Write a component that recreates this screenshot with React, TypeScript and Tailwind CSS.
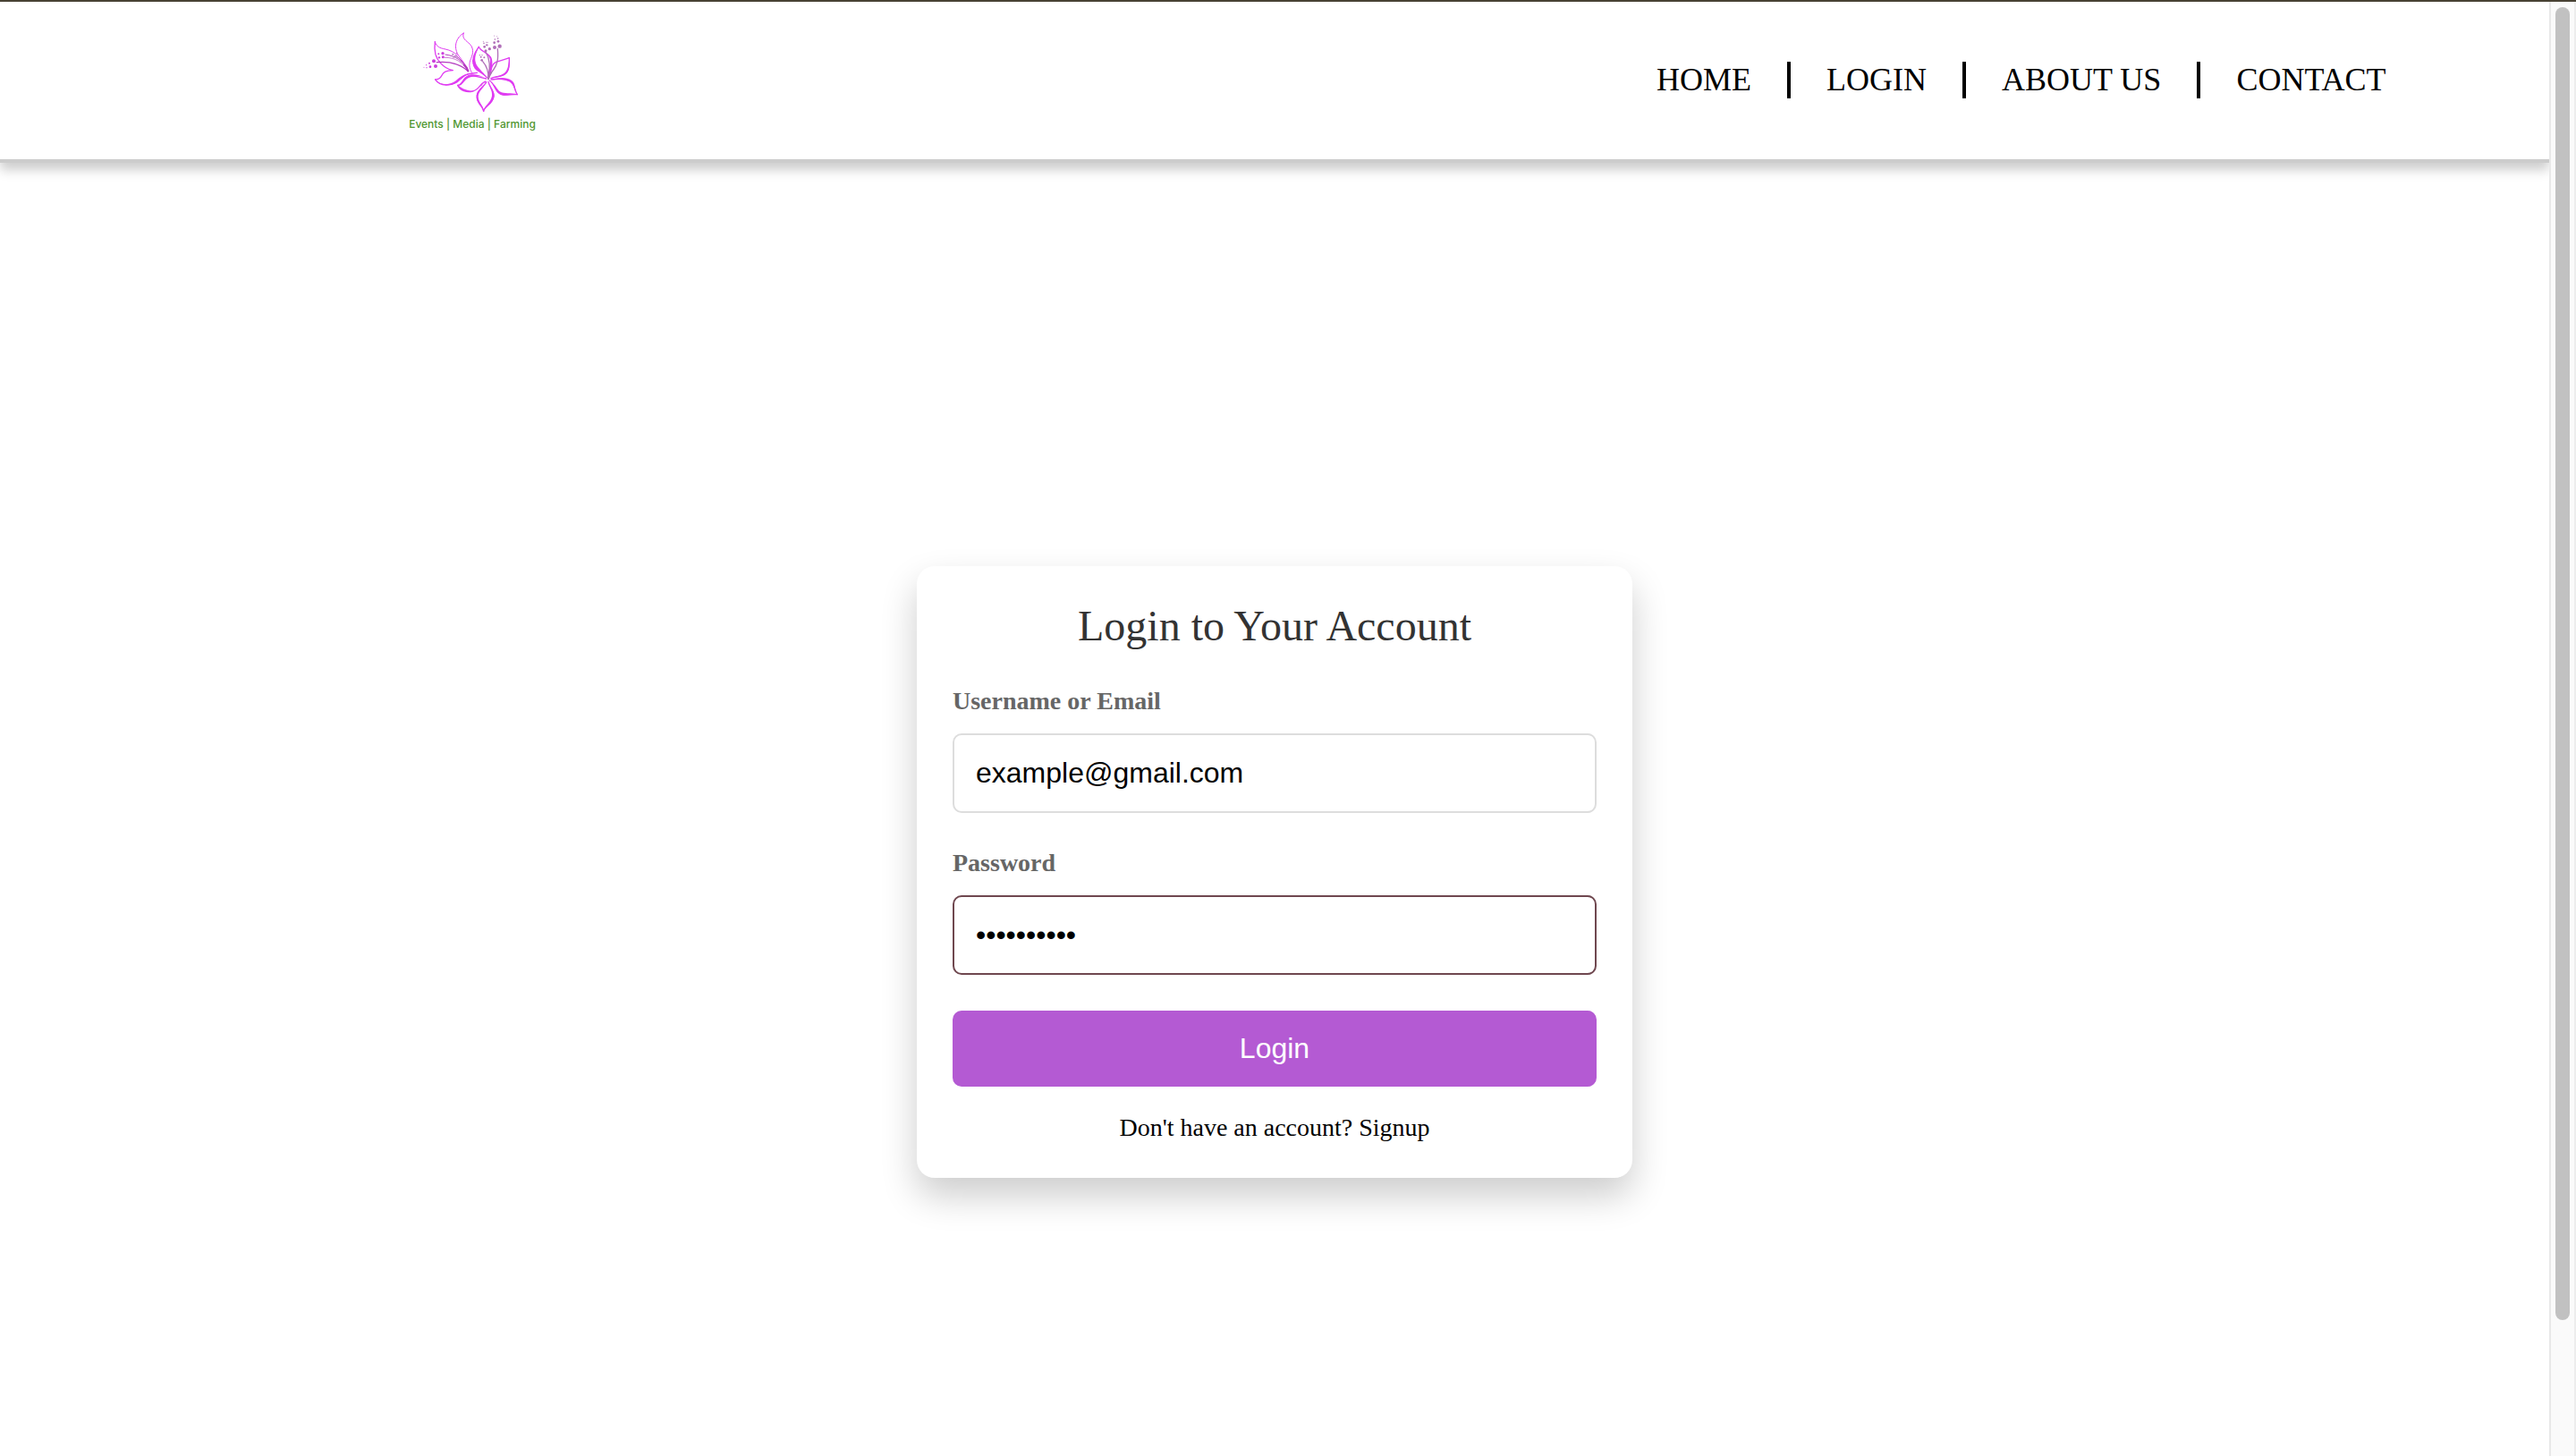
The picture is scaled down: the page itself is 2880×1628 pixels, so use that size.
import React from "react";

const brightDots = [
  [135, 145, 6], [141, 162, 6], [165, 119, 5], [166, 131, 4.5], [153, 133, 3.5], [123, 164, 4],
  [120, 152, 3], [151, 121, 3], [110, 158, 2], [111, 167, 2], [102, 166, 1.5], [143, 128, 2],
];

const mauveDots = [
  [356, 95, 6.5], [339, 99, 6], [322, 104, 5], [309, 110, 4.5], [351, 79, 4], [338, 83, 4],
  [305, 97, 4], [313, 91, 3.5], [350, 69, 2.5], [340, 72, 2.5], [303, 85, 2.5], [315, 82, 2],
  [338, 60, 1.5], [347, 62, 1.5], [301, 79, 1.5], [311, 82, 1.5], [296, 142, 4], [304, 133, 3],
  [293, 131, 3], [289, 125, 2], [297, 125, 2], [199, 122, 3], [207, 128, 3], [212, 118, 2],
  [201, 132, 2], [213, 132, 2],
];

const links = ["HOME", "LOGIN", "ABOUT US", "CONTACT"];

function FlowerLogo() {
  return (
    <svg viewBox="48 30 432 300" className="block h-[100px] w-[144px]" fill="none" aria-hidden="true">
      <g stroke="#e03cf2" strokeWidth="4" strokeLinecap="round" strokeLinejoin="round">
        <path d="M139 80C135 112 141 136 158 152C169 165 185 173 199 176C176 177 167 181 161 194C157 203 149 206 140 207" />
        <path d="M139 80C144 97 154 101 174 105C191 109 201 114 214 125" strokeWidth="3" />
        <path d="M140 207C151 224 170 228 194 223C218 218 222 202 240 192C254 185 266 187 280 184" />
        <path d="M235 51C211 65 204 90 211 112C216 130 238 147 247 171" strokeWidth="3" />
        <path d="M235 51C228 70 244 76 256 88C273 107 264 126 257 143C252 160 256 174 263 184" strokeWidth="3" />
        <path d="M286 97C272 116 262 135 268 155C274 176 298 183 313 200" />
        <path d="M286 97C290 112 318 115 325 135C331 157 318 176 318 198" />
        <path d="M388 134C361 145 339 143 331 161C326 173 327 185 320 198" />
        <path d="M388 134C389 165 387 185 363 194C348 200 337 196 327 203" />
        <path d="M327 207C353 203 373 202 391 213C408 225 405 241 415 257" />
        <path d="M415 257C387 254 370 267 350 248C340 238 334 216 321 210" />
        <path d="M311 215C307 229 282 237 280 260C277 284 300 294 302 313" />
        <path d="M302 313C304 297 333 290 336 262C337 241 322 233 318 215" />
        <path d="M215 226C235 227 231 203 249 197C271 189 291 202 311 204" />
        <path d="M215 226C224 244 245 251 265 246C289 241 288 222 307 213" />
        <path d="M311 215C304 213 298 221 294 228" strokeWidth="3" />
      </g>
      <g fill="#e03cf2">
        <path d="M286 98C263 130 258 159 279 177C291 185 304 190 314 201C299 178 278 167 275 148C271 130 278 115 286 98Z" />
        <path d="M286 98C293 115 314 115 323 134C330 151 320 175 319 198C330 176 335 151 328 133C319 116 296 116 286 98Z" />
        <path d="M216 226C228 248 252 252 270 246C248 245 231 239 216 226Z" />
        <path d="M214 226C233 220 231 194 261 190C278 188 291 194 306 200C279 192 260 196 248 203C236 211 232 225 214 226Z" />
        <path d="M302 314C295 294 275 285 278 260C280 242 300 234 307 220C302 238 286 244 284 263C284 285 303 294 302 314Z" />
        <path d="M302 314C307 295 335 290 338 262C338 244 324 234 319 220C322 234 332 245 330 262C326 286 303 294 302 314Z" />
        <path d="M415 258C385 254 368 270 348 250C339 239 335 221 325 214C342 224 345 237 356 247C372 257 393 249 415 258Z" />
        <path d="M415 258C401 240 407 224 389 214C371 205 350 205 333 208C356 199 378 199 395 209C412 221 405 239 415 258Z" />
        <path d="M140 207C160 228 190 226 209 211C222 199 238 188 258 187C237 194 226 207 214 217C189 232 153 227 140 207Z" />
        <path d="M388 134C391 164 388 189 364 195C351 199 341 198 329 204C345 192 365 195 377 179C385 168 386 151 388 134Z" />
      </g>
      <g stroke="#b43cc0" strokeLinecap="round">
        <path d="M145 149C185 145 219 151 249 178" strokeWidth="4" />
        <path d="M174 123C208 127 234 145 250 178" strokeWidth="3" />
        <path d="M172 133C206 132 233 149 250 178" strokeWidth="2" />
        <path d="M210 127C228 141 242 158 250 178" strokeWidth="3" />
        <path d="M237 158C243 163 247 170 250 178" strokeWidth="7" />
      </g>
      <g stroke="#b06fb9" strokeLinecap="round">
        <path d="M349 104C352 140 348 157 335 174C326 184 321 192 318 203" strokeWidth="4" />
        <path d="M309 114C322 135 327 163 317 204" strokeWidth="4" />
        <path d="M299 146C311 160 319 180 318 204" strokeWidth="4" />
        <path d="M327 184C323 190 320 196 318 204" strokeWidth="6" />
      </g>
      <g fill="#cc3fdc">
        {brightDots.map(([x, y, r]) => <circle key={`${x}-${y}`} cx={x} cy={y} r={r} />)}
      </g>
      <g fill="#b06fb9">
        {mauveDots.map(([x, y, r]) => <circle key={`${x}-${y}`} cx={x} cy={y} r={r} />)}
      </g>
    </svg>
  );
}

function Header() {
  return (
    <header className="flex items-center justify-between border-b-4 border-[#cccccc] bg-white pt-7 pr-[5%] pb-[30px] pl-[16%] shadow-[0_8px_12px_rgba(0,0,0,0.2)]">
      <a href="#home" className="flex flex-col items-center">
        <FlowerLogo />
        <span className="font-['Inter',sans-serif] text-[12px] leading-[18px] font-medium whitespace-nowrap text-[#4f9630]">
          Events | Media | Farming
        </span>
      </a>
      <nav>
        <ul className="flex divide-x-4 divide-black">
          {links.map((label) => (
            <li key={label} className="px-10 text-[36px] leading-[41px]">
              <a href={`#${label.toLowerCase().replace(" ", "-")}`}>{label}</a>
            </li>
          ))}
        </ul>
      </nav>
    </header>
  );
}

function LoginCard() {
  const field =
    "block h-[89px] w-full rounded-[10px] border-2 bg-white px-6 font-['Liberation_Sans',Arial,sans-serif] text-[32px] text-black outline-none";
  const label = "mb-5 block text-[28px] leading-8 font-bold text-[#666666]";
  return (
    <form
      onSubmit={(e) => e.preventDefault()}
      className="w-full max-w-[800px] rounded-[20px] bg-white p-10 shadow-[0_20px_40px_rgba(0,0,0,0.2)]"
    >
      <h1 className="mb-[41px] text-center text-[48px] leading-[54px] text-[#333333]">Login to Your Account</h1>
      <div className="mb-10">
        <label htmlFor="email" className={label}>Username or Email</label>
        <input id="email" type="text" defaultValue="example@gmail.com" className={`${field} border-[#dddddd]`} />
      </div>
      <div className="mb-10">
        <label htmlFor="password" className={label}>Password</label>
        <input id="password" type="password" defaultValue="helloworld" className={`${field} border-[#6f474f]`} />
      </div>
      <button
        type="submit"
        className="block h-[85px] w-full rounded-[10px] bg-[#b45ad3] pb-0.5 font-['Liberation_Sans',Arial,sans-serif] text-[32px] text-white"
      >
        Login
      </button>
      <p className="mt-[30px] text-center text-[28px] leading-8">
        Don't have an account? <a href="#signup">Signup</a>
      </p>
    </form>
  );
}

export default function App() {
  return (
    <div className="flex h-screen overflow-hidden border-t-2 border-[#484234] bg-white font-['Liberation_Serif','Times_New_Roman',serif] text-black">
      <div className="min-w-0 flex-1 overflow-hidden">
        <Header />
        <main className="flex justify-center pt-[451px]">
          <LoginCard />
        </main>
      </div>
      <div aria-hidden="true" className="w-[30px] shrink-0 border-x-2 border-l-[#e8e8e8] border-r-[#ededed] bg-[#fafafa] px-1 pt-1.5">
        <div className="mx-auto h-[90.6%] w-4 rounded-full bg-[#c1c1c1]" />
      </div>
    </div>
  );
}
